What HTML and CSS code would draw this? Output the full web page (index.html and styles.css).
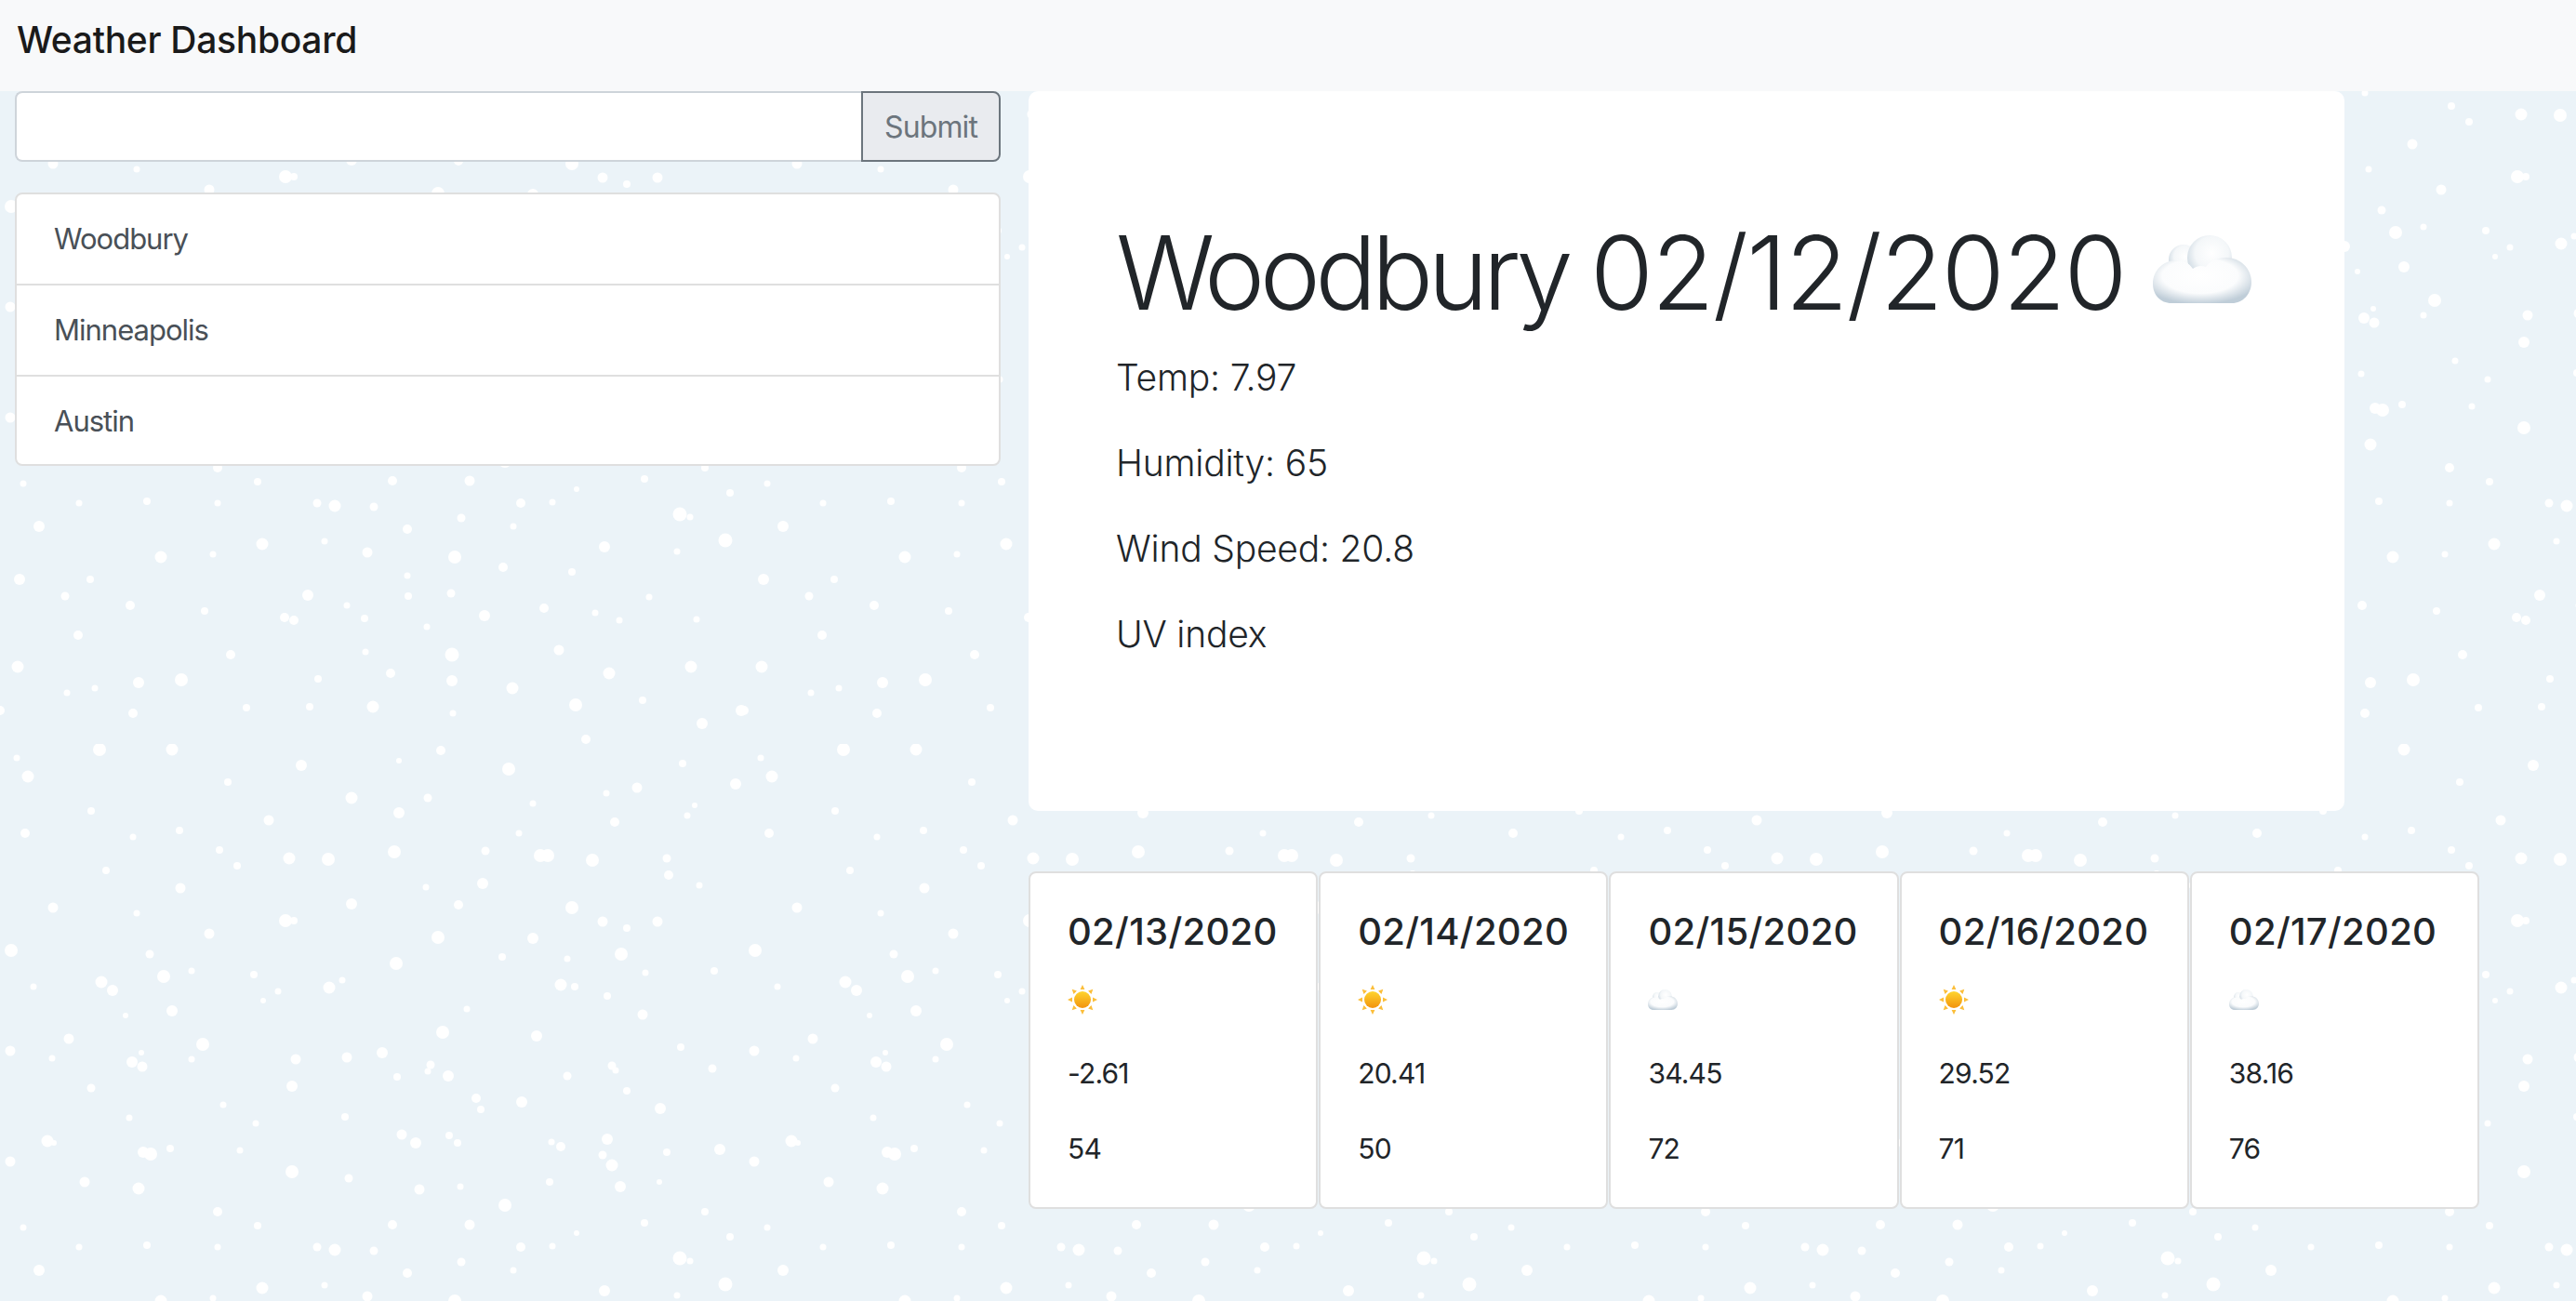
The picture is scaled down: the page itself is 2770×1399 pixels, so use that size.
FILE: index.html
```html
<!DOCTYPE html>
<html lang="en">

<head>
  <meta charset="UTF-8" />
  <meta name="viewport" content="width=device-width, initial-scale=1.0" />
  <title>Weather Dashboard</title>
  <link rel="stylesheet" href="styles.css">
</head>

<body>

  <!-- icons used by the forecast -->
  <svg class="icon-defs" aria-hidden="true">
    <defs>
      <radialGradient id="cloudFill" cx="0.48" cy="0.4" r="0.62">
        <stop offset="0" stop-color="#ffffff" />
        <stop offset="0.62" stop-color="#fbfcfd" />
        <stop offset="1" stop-color="#bfcdd8" />
      </radialGradient>
      <radialGradient id="cloudBack" cx="0.55" cy="0.4" r="0.62">
        <stop offset="0" stop-color="#ffffff" />
        <stop offset="0.6" stop-color="#f4f7f9" />
        <stop offset="1" stop-color="#ccd8e1" />
      </radialGradient>
      <linearGradient id="sunFill" x1="0" y1="0" x2="0" y2="1">
        <stop offset="0" stop-color="#ffd52e" />
        <stop offset="1" stop-color="#f2930d" />
      </linearGradient>
      <symbol id="cloud" viewBox="0 0 106 73">
        <circle cx="33" cy="26" r="16" fill="url(#cloudBack)" />
        <circle cx="61" cy="24" r="24" fill="url(#cloudBack)" />
        <path fill="url(#cloudFill)" d="M20 73C8 73 0 64 0 52C0 38 11 27 25 27C33 27 39 30 43 36C47 33 52 32 57 34C62 27 71 24 79 24C94 24 106 36 106 50C106 63 97 73 85 73Z" />
      </symbol>
      <symbol id="sun" viewBox="0 0 32 32">
        <path fill="#fbbe3a" d="M16 0l2.400 5h-4.800zM16 32l-2.400-5h4.800zM0 16l5-2.400v4.800zM32 16l-5 2.400v-4.800zM4.700 4.700l5.200 1.800l-3.400 3.400zM27.300 27.300l-5.200-1.800l3.400-3.400zM27.300 4.700l-1.800 5.200l-3.400-3.400zM4.700 27.300l1.800-5.200l3.400 3.400z" />
        <circle cx="16" cy="16" r="9" fill="url(#sunFill)" />
      </symbol>
    </defs>
  </svg>

  <nav class="navbar">
    <span class="brand">Weather Dashboard</span>
  </nav>

  <main class="page">
    <section class="sidebar">
      <form class="search">
        <input class="search-input" type="text" />
        <button class="search-btn" type="button">Submit</button>
      </form>
      <ul class="city-list">
        <li>Woodbury</li>
        <li>Minneapolis</li>
        <li>Austin</li>
      </ul>
    </section>

    <section class="weather">
      <div class="current">
        <h1><span class="city-name">Woodbury</span> <span class="city-date">02/12/2020</span> <svg class="cloud-big"><use href="#cloud" /></svg></h1>
        <p>Temp: 7.97</p>
        <p>Humidity: 65</p>
        <p>Wind Speed: 20.8</p>
        <p>UV index</p>
      </div>

      <div class="forecast">
        <div class="card">
          <h5>02/13/2020</h5>
          <div class="card-icon"><svg class="sun"><use href="#sun" /></svg></div>
          <p>-2.61</p>
          <p>54</p>
        </div>
        <div class="card">
          <h5>02/14/2020</h5>
          <div class="card-icon"><svg class="sun"><use href="#sun" /></svg></div>
          <p>20.41</p>
          <p>50</p>
        </div>
        <div class="card">
          <h5>02/15/2020</h5>
          <div class="card-icon"><svg class="cloud-small"><use href="#cloud" /></svg></div>
          <p>34.45</p>
          <p>72</p>
        </div>
        <div class="card">
          <h5>02/16/2020</h5>
          <div class="card-icon"><svg class="sun"><use href="#sun" /></svg></div>
          <p>29.52</p>
          <p>71</p>
        </div>
        <div class="card">
          <h5>02/17/2020</h5>
          <div class="card-icon"><svg class="cloud-small"><use href="#cloud" /></svg></div>
          <p>38.16</p>
          <p>76</p>
        </div>
      </div>
    </section>
  </main>

</body>

</html>
```
FILE: styles.css
```css
html {
  background: #ebf3f8;
}

body {
  font-family: Inter, 'Noto Sans', sans-serif;
  color: #212529;
  margin: 0;
  padding: 0;
  min-height: 1399px;
  box-sizing: border-box;
  background-color: #ebf3f8;
  background-size: 800px 800px;
  background-image: url("data:image/svg+xml,<svg xmlns='http://www.w3.org/2000/svg' width='800' height='800'><g fill='white'><circle cx='234' cy='503' r='5'/><circle cx='25' cy='520' r='3.5'/><circle cx='277' cy='518' r='4'/><circle cx='422' cy='517' r='5'/><circle cx='505' cy='517' r='5.5'/><circle cx='620' cy='526' r='3'/><circle cx='693' cy='515' r='4'/><circle cx='785' cy='530' r='4'/><circle cx='758' cy='503' r='4'/><circle cx='85' cy='541' r='3.5'/><circle cx='158' cy='539' r='4'/><circle cx='234' cy='541' r='3.5'/><circle cx='341' cy='541' r='4.5'/><circle cx='360' cy='544' r='6.5'/><circle cx='402' cy='545' r='4.5'/><circle cx='560' cy='541' r='5'/><circle cx='594' cy='540' r='3.5'/><circle cx='42' cy='566' r='6'/><circle cx='496' cy='557' r='4.5'/><circle cx='438' cy='569' r='5'/><circle cx='552' cy='566' r='3.5'/><circle cx='731' cy='553' r='7.5'/><circle cx='742' cy='556' r='3.5'/><circle cx='780' cy='581' r='7.5'/><circle cx='282' cy='585' r='6.5'/><circle cx='349' cy='582' r='3.5'/><circle cx='173' cy='599' r='6.5'/><circle cx='229' cy='596' r='3.5'/><circle cx='395' cy='594' r='5.5'/><circle cx='489' cy='599' r='7'/><circle cx='650' cy='588' r='6'/><circle cx='728' cy='593' r='3.5'/><circle cx='541' cy='610' r='5'/><circle cx='21' cy='623' r='6'/><circle cx='97' cy='623' r='4'/><circle cx='438' cy='619' r='3.5'/><circle cx='615' cy='615' r='4'/><circle cx='70' cy='641' r='4.5'/><circle cx='331' cy='640' r='6'/><circle cx='439' cy='641' r='4'/><circle cx='485' cy='638' r='4.5'/><circle cx='698' cy='642' r='3.5'/><circle cx='140' cy='651' r='5'/><circle cx='373' cy='651' r='3.5'/><circle cx='220' cy='657' r='4'/><circle cx='585' cy='654' r='5'/><circle cx='640' cy='659' r='3.5'/><circle cx='306' cy='664' r='5'/><circle cx='316' cy='667' r='5'/><circle cx='392' cy='665' r='4'/><circle cx='521' cy='662' r='6'/><circle cx='666' cy='667' r='3.5'/><circle cx='749' cy='666' r='3.5'/><circle cx='459' cy='674' r='3.5'/><circle cx='84' cy='683' r='5'/><circle cx='393' cy='701' r='3.5'/><circle cx='248' cy='704' r='5'/><circle cx='486' cy='704' r='7.5'/><circle cx='601' cy='699' r='5.5'/><circle cx='19' cy='717' r='6.5'/><circle cx='743' cy='717' r='6.5'/><circle cx='420' cy='724' r='5'/><circle cx='655' cy='724' r='6.5'/><circle cx='195' cy='731' r='7'/><circle cx='342' cy='730' r='4'/><circle cx='486' cy='732' r='6'/><circle cx='149' cy='734' r='6'/><circle cx='102' cy='740' r='3.5'/><circle cx='72' cy='745' r='3.5'/><circle cx='551' cy='740' r='6.5'/><circle cx='691' cy='753' r='4'/><circle cx='619' cy='758' r='7'/><circle cx='265' cy='761' r='4'/><circle cx='333' cy='760' r='4'/><circle cx='401' cy='760' r='6.5'/><circle cx='797' cy='764' r='6'/><circle cx='0' cy='764' r='5'/><circle cx='800' cy='764' r='5'/><circle cx='143' cy='767' r='5'/><circle cx='487' cy='767' r='3.5'/><circle cx='755' cy='778' r='6'/><circle cx='630' cy='795' r='5'/><circle cx='107' cy='6' r='7'/><circle cx='185' cy='6' r='6.5'/><circle cx='18' cy='15' r='3.5'/><circle cx='474' cy='7' r='5'/><circle cx='429' cy='18' r='3'/><circle cx='734' cy='21' r='4'/><circle cx='30' cy='35' r='6.5'/><circle cx='324' cy='23' r='6'/><circle cx='547' cy='27' r='7'/><circle cx='245' cy='41' r='4'/><circle cx='791' cy='43' r='6'/><circle cx='685' cy='47' r='5.5'/><circle cx='652' cy='53' r='3.5'/><circle cx='378' cy='58' r='6.5'/><circle cx='460' cy='58' r='4.5'/><circle cx='573' cy='64' r='3.5'/><circle cx='98' cy='72' r='4'/><circle cx='429' cy='74' r='6'/><circle cx='747' cy='66' r='3'/><circle cx='739' cy='77' r='3.5'/><circle cx='289' cy='82' r='5.5'/><circle cx='661' cy='84' r='5'/><circle cx='27' cy='96' r='5'/><circle cx='193' cy='93' r='4'/><circle cx='558' cy='96' r='3.5'/><circle cx='143' cy='100' r='3.5'/><circle cx='236' cy='114' r='4'/><circle cx='424' cy='116' r='7'/><circle cx='522' cy='115' r='4.5'/><circle cx='581' cy='120' r='7'/><circle cx='589' cy='120' r='7'/><circle cx='311' cy='123' r='6.5'/><circle cx='353' cy='124' r='7'/><circle cx='637' cy='125' r='7'/><circle cx='717' cy='123' r='4.5'/><circle cx='255' cy='131' r='4'/><circle cx='114' cy='136' r='4'/><circle cx='719' cy='141' r='5'/><circle cx='519' cy='150' r='6'/><circle cx='194' cy='155' r='5.5'/><circle cx='458' cy='154' r='3.5'/><circle cx='752' cy='152' r='3.5'/><circle cx='57' cy='176' r='5.5'/><circle cx='378' cy='172' r='6'/><circle cx='493' cy='173' r='5'/><circle cx='615' cy='176' r='7'/><circle cx='147' cy='182' r='3.5'/><circle cx='307' cy='190' r='7'/><circle cx='316' cy='190' r='4'/><circle cx='648' cy='191' r='5.5'/><circle cx='707' cy='191' r='5.5'/><circle cx='674' cy='198' r='4'/><circle cx='225' cy='204' r='5.5'/><circle cx='471' cy='208' r='7'/><circle cx='573' cy='209' r='6'/><circle cx='12' cy='222' r='7'/><circle cx='161' cy='226' r='4.5'/><circle cx='540' cy='229' r='4'/><circle cx='610' cy='231' r='3.5'/><circle cx='668' cy='226' r='7'/><circle cx='426' cy='236' r='7'/><circle cx='206' cy='244' r='3.5'/><circle cx='176' cy='250' r='7'/><circle cx='273' cy='248' r='4'/><circle cx='368' cy='254' r='3.5'/><circle cx='694' cy='246' r='3.5'/><circle cx='768' cy='244' r='4'/><circle cx='109' cy='256' r='6.5'/><circle cx='121' cy='265' r='6'/><circle cx='36' cy='261' r='3.5'/><circle cx='354' cy='262' r='6.5'/><circle cx='603' cy='259' r='6.5'/><circle cx='618' cy='261' r='4'/><circle cx='299' cy='266' r='3.5'/><circle cx='283' cy='276' r='3'/><circle cx='653' cy='271' r='4'/><circle cx='135' cy='292' r='3'/><circle cx='185' cy='287' r='6'/><circle cx='502' cy='285' r='3.5'/><circle cx='691' cy='291' r='5.5'/><circle cx='476' cy='310' r='7'/><circle cx='74' cy='317' r='5.5'/><circle cx='577' cy='314' r='6'/><circle cx='218' cy='323' r='7'/><circle cx='11' cy='330' r='5.5'/><circle cx='411' cy='332' r='6'/><circle cx='732' cy='326' r='4'/><circle cx='152' cy='332' r='3'/><circle cx='56' cy='338' r='3.5'/><circle cx='206' cy='339' r='3.5'/><circle cx='318' cy='339' r='5.5'/><circle cx='373' cy='337' r='5.5'/><circle cx='463' cy='345' r='4.5'/><circle cx='460' cy='352' r='3.5'/><circle cx='142' cy='342' r='6'/><circle cx='153' cy='347' r='5.5'/><circle cx='658' cy='346' r='4.5'/><circle cx='662' cy='351' r='3.5'/><circle cx='766' cy='349' r='4.5'/><circle cx='427' cy='358' r='4'/><circle cx='482' cy='357' r='6'/><circle cx='610' cy='357' r='4.5'/><circle cx='98' cy='370' r='4.5'/><circle cx='314' cy='368' r='6'/><circle cx='674' cy='373' r='4'/><circle cx='512' cy='381' r='5'/><circle cx='561' cy='385' r='6'/><circle cx='240' cy='388' r='3.5'/><circle cx='517' cy='393' r='4'/><circle cx='710' cy='392' r='6'/><circle cx='371' cy='401' r='4'/><circle cx='139' cy='402' r='3.5'/><circle cx='275' cy='408' r='3.5'/><circle cx='51' cy='427' r='6.5'/><circle cx='58' cy='429' r='3'/><circle cx='432' cy='420' r='5.5'/><circle cx='483' cy='421' r='4'/><circle cx='492' cy='429' r='4'/><circle cx='447' cy='429' r='6'/><circle cx='593' cy='428' r='3.5'/><circle cx='603' cy='433' r='5'/><circle cx='653' cy='425' r='6'/><circle cx='154' cy='439' r='6'/><circle cx='162' cy='441' r='7'/><circle cx='183' cy='435' r='4'/><circle cx='258' cy='437' r='3.5'/><circle cx='717' cy='439' r='4'/><circle cx='774' cy='436' r='6'/><circle cx='11' cy='449' r='5.5'/><circle cx='648' cy='442' r='4.5'/><circle cx='658' cy='453' r='6.5'/><circle cx='314' cy='460' r='7'/><circle cx='91' cy='471' r='5.5'/><circle cx='375' cy='467' r='4.5'/><circle cx='149' cy='478' r='6.5'/><circle cx='451' cy='479' r='5.5'/><circle cx='495' cy='476' r='3.5'/><circle cx='591' cy='471' r='4'/><circle cx='667' cy='476' r='6'/><circle cx='709' cy='471' r='3'/><circle cx='543' cy='496' r='7'/></g></svg>");
}

.icon-defs {
  width: 0;
  height: 0;
  display: block;
}

.navbar {
  height: 98px;
  background-color: #f8f9fa;
  padding: 0 18px;
  display: flex;
  align-items: center;
}

.brand {
  font-size: 39px;
  font-weight: 500;
  letter-spacing: -0.3px;
  color: #1a1a1a;
  margin-top: -13px;
}

.page {
  display: flex;
  align-items: flex-start;
  gap: 30px;
  padding-left: 16px;
}

.sidebar {
  width: 1060px;
  flex-shrink: 0;
}

.search {
  display: flex;
  height: 76px;
  margin-bottom: 33px;
}

.search-input {
  flex: 1;
  min-width: 0;
  border: 2px solid #ced4da;
  border-right: none;
  border-radius: 8px 0 0 8px;
  background: white;
  padding: 0;
}

.search-btn {
  width: 150px;
  font-family: inherit;
  font-size: 32px;
  letter-spacing: -0.9px;
  color: #6c757d;
  background-color: #e9ebef;
  border: 2px solid #6c757d;
  border-radius: 0 8px 8px 0;
  padding: 0;
}

.city-list {
  list-style: none;
  margin: 0;
  padding: 0;
  border: 2px solid #dfdfdf;
  border-radius: 8px;
  background: white;
}

.city-list li {
  height: 96px;
  line-height: 96px;
  padding-left: 40px;
  font-size: 31px;
  letter-spacing: -1px;
  color: #495057;
  border-bottom: 2px solid #dfdfdf;
}

.city-list li:last-child {
  height: 94px;
  border-bottom: none;
}

.weather {
  flex: 1;
  min-width: 0;
}

.current {
  width: 1415px;
  height: 774px;
  box-sizing: border-box;
  background: white;
  border-radius: 10px;
  padding: 128px 0 0 94px;
  margin-bottom: 65px;
}

.current h1 {
  font-size: 110px;
  font-weight: 300;
  line-height: 134px;
  word-spacing: -7px;
  margin: 0 0 18px;
  white-space: nowrap;
}

.city-name {
  letter-spacing: -5.6px;
}

.city-date {
  letter-spacing: -1.8px;
}

.cloud-big {
  width: 106px;
  height: 73px;
  margin-left: 5px;
  vertical-align: 7px;
}

.current p {
  font-size: 39px;
  font-weight: 300;
  line-height: 56px;
  letter-spacing: -0.2px;
  margin: 0 0 36px;
}

.forecast {
  display: flex;
  gap: 1px;
  width: 1560px;
}

.card {
  flex: 1;
  height: 363px;
  box-sizing: border-box;
  background: white;
  border: 2px solid #dfdfdf;
  border-radius: 8px;
  padding: 33px 0 0 40px;
}

.card h5 {
  font-size: 40px;
  font-weight: 500;
  line-height: 60px;
  letter-spacing: 0.3px;
  margin: 0 0 24px;
}

.card-icon {
  height: 38px;
  display: flex;
  align-items: center;
  margin-bottom: 38px;
}

.sun {
  width: 32px;
  height: 32px;
}

.cloud-small {
  width: 32px;
  height: 22px;
}

.card p {
  font-size: 30px;
  line-height: 45px;
  letter-spacing: -0.8px;
  margin: 0 0 36px;
}
```
